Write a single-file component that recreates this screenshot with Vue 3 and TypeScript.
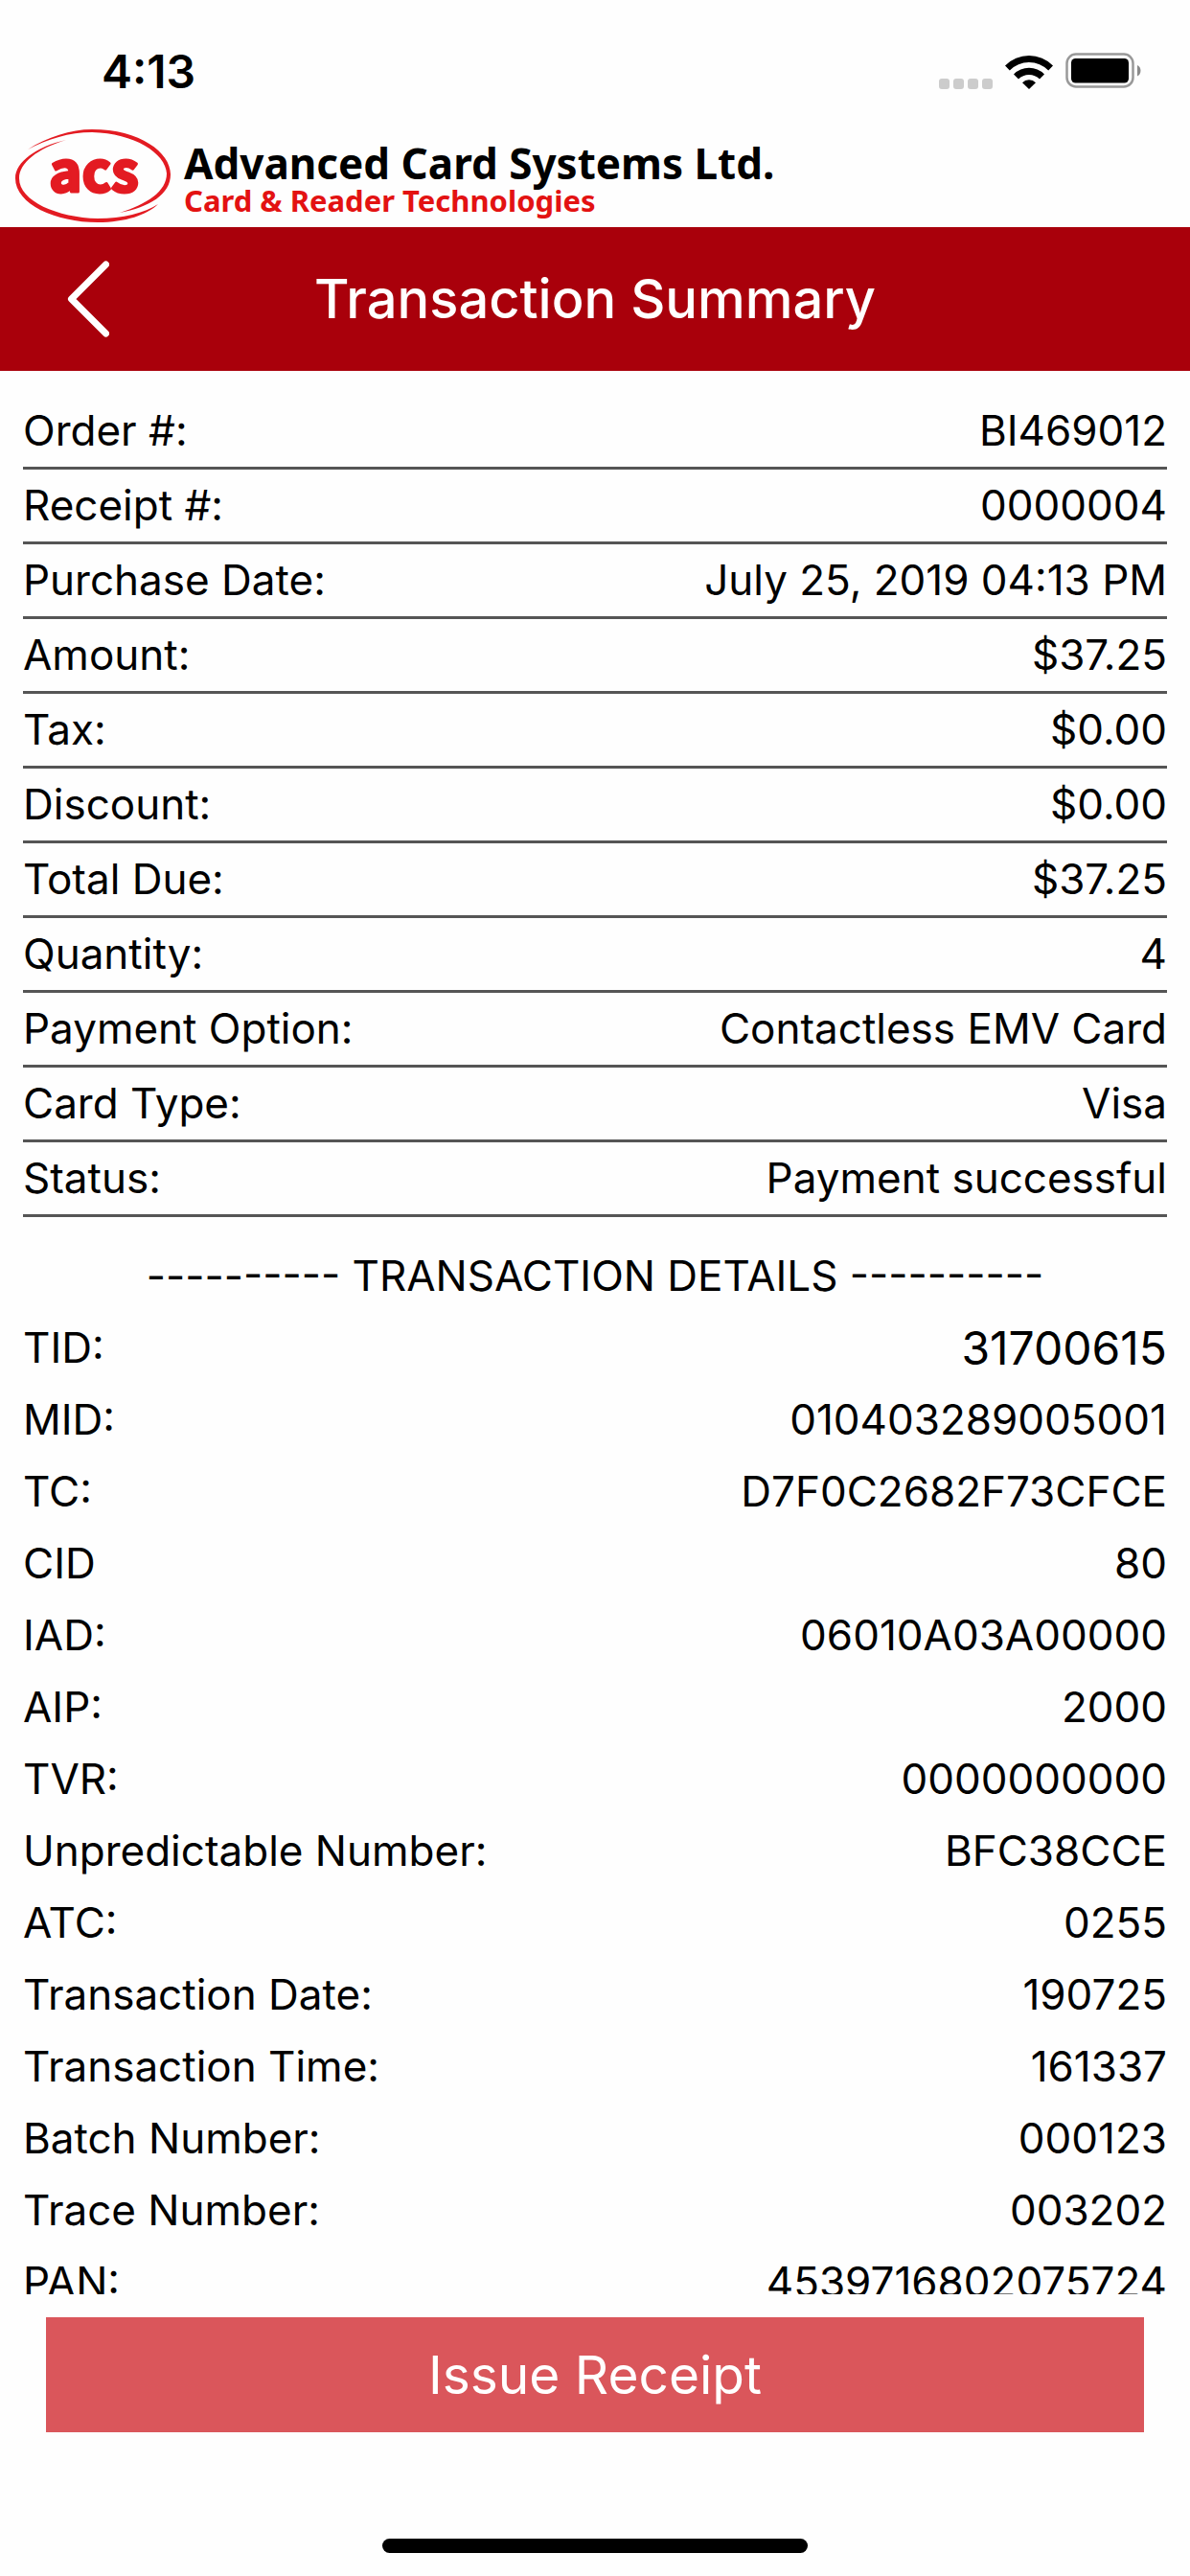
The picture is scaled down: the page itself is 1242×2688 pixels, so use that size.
<script setup lang="ts">
interface Entry {
  label: string
  value: string
  large?: boolean
}

const summary: Entry[] = [
  { label: 'Order #:', value: 'BI469012' },
  { label: 'Receipt #:', value: '0000004' },
  { label: 'Purchase Date:', value: 'July 25, 2019 04:13 PM' },
  { label: 'Amount:', value: '$37.25' },
  { label: 'Tax:', value: '$0.00' },
  { label: 'Discount:', value: '$0.00' },
  { label: 'Total Due:', value: '$37.25' },
  { label: 'Quantity:', value: '4' },
  { label: 'Payment Option:', value: 'Contactless EMV Card' },
  { label: 'Card Type:', value: 'Visa' },
  { label: 'Status:', value: 'Payment successful' },
]

const details: Entry[] = [
  { label: 'TID:', value: '31700615', large: true },
  { label: 'MID:', value: '010403289005001' },
  { label: 'TC:', value: 'D7F0C2682F73CFCE' },
  { label: 'CID', value: '80' },
  { label: 'IAD:', value: '06010A03A00000' },
  { label: 'AIP:', value: '2000' },
  { label: 'TVR:', value: '0000000000' },
  { label: 'Unpredictable Number:', value: 'BFC38CCE' },
  { label: 'ATC:', value: '0255' },
  { label: 'Transaction Date:', value: '190725' },
  { label: 'Transaction Time:', value: '161337' },
  { label: 'Batch Number:', value: '000123' },
  { label: 'Trace Number:', value: '003202' },
  { label: 'PAN:', value: '4539716802075724' },
]
</script>

<template>
  <div class="screen">
    <div class="status-bar">
      <span class="time">4:13</span>
      <div class="indicators">
        <div class="signal"><i v-for="n in 4" :key="n"></i></div>
        <svg class="wifi" width="50" height="36" viewBox="0 0 50 36" aria-hidden="true">
          <path d="M0 11.500A35.300 35.300 0 0 1 50 11.500L45.200 16.400A28.500 28.500 0 0 0 4.800 16.400Z" />
          <path d="M9 20.500A22.600 22.600 0 0 1 41 20.500L36 25.500A15.600 15.600 0 0 0 14 25.500Z" />
          <path d="M18 29.200A10 10 0 0 1 32 29.200L25 36Z" />
        </svg>
        <svg class="battery" width="80" height="38" viewBox="0 0 80 38" aria-hidden="true">
          <rect x="1.500" y="1.500" width="69" height="34" rx="9.500" fill="none" stroke="#999" stroke-width="2.500" />
          <rect x="6" y="6" width="60" height="25.500" rx="4.500" fill="#000" />
          <path d="M75 13a6.500 6.500 0 0 1 0 11.500Z" fill="#8a8a8a" />
        </svg>
      </div>
    </div>

    <div class="brand">
      <svg width="164" height="98" viewBox="0 0 164 98" role="img" aria-label="acs">
        <path d="M13 20C33 7 58 -1 80 -1C130 -1 162 23 162 46C162 67 140 80 109 86C137 77 158 64 158 45C157 24 124 3 80 2C56 2 34 9 13 20Z" fill="#e31b22" />
        <path d="M53 10C22 17 0 33 0 50C0 77 42 96 86 96C115 96 138 88 149 77C135 86 112 92 86 92C44 91 4 74 4 50C4 34 23 19 53 10Z" fill="#e31b22" />
        <text x="82" y="64" text-anchor="middle" class="mark">acs</text>
      </svg>
      <div class="brand-text">
        <span class="company">Advanced Card Systems Ltd.</span>
        <span class="tagline">Card &amp; Reader Technologies</span>
      </div>
    </div>

    <header class="title-bar">
      <button class="back" type="button" aria-label="Back">
        <svg width="44" height="80" viewBox="0 0 44 80" aria-hidden="true">
          <path d="M40.500 4L4.500 40L40.500 76" fill="none" stroke="#fff" stroke-width="7" stroke-linecap="round" stroke-linejoin="round" />
        </svg>
      </button>
      <h1>Transaction Summary</h1>
    </header>

    <main class="content">
      <dl class="summary">
        <div v-for="row in summary" :key="row.label" class="row">
          <dt>{{ row.label }}</dt>
          <dd>{{ row.value }}</dd>
        </div>
      </dl>
      <h2>---------- TRANSACTION DETAILS ----------</h2>
      <dl class="details">
        <div v-for="row in details" :key="row.label" class="row">
          <dt>{{ row.label }}</dt>
          <dd :class="{ large: row.large }">{{ row.value }}</dd>
        </div>
      </dl>
    </main>

    <footer class="actions">
      <button class="issue" type="button">Issue Receipt</button>
      <div class="home-indicator"></div>
    </footer>
  </div>
</template>

<style>
body {
  background: #fefefe;
}
</style>

<style scoped>
.screen {
  display: flex;
  flex-direction: column;
  height: 100vh;
  overflow: hidden;
  background: #fefefe;
  color: #000;
  font-family: Inter, "Liberation Sans", sans-serif;
  font-size: 44px;
}
h1,
h2,
dl,
dd {
  margin: 0;
  font-weight: 400;
}
button {
  border: 0;
  padding: 0;
  font-family: inherit;
  color: #fff;
}
.status-bar {
  flex: none;
  display: flex;
  align-items: center;
  justify-content: space-between;
  height: 136px;
  padding: 12px 50px 0 106px;
  box-sizing: border-box;
}
.time {
  font-size: 48px;
  font-weight: 600;
}
.indicators {
  display: flex;
  align-items: flex-end;
}
.signal {
  display: flex;
  gap: 4px;
  margin-right: 13px;
}
.signal i {
  width: 11px;
  height: 11px;
  border-radius: 3px;
  background: #ccc;
}
.wifi {
  margin-right: 13px;
}
.brand {
  flex: none;
  display: flex;
  align-items: flex-start;
  height: 101px;
  padding: 0 16px;
}
.brand svg {
  overflow: visible;
}
.mark {
  fill: #e31b22;
  stroke: #e31b22;
  stroke-width: 3px;
  stroke-linejoin: round;
  font-family: "Noto Sans CJK SC", sans-serif;
  font-size: 58px;
  font-weight: 700;
}
.brand-text {
  display: flex;
  flex-direction: column;
  margin: 9px 0 0 12px;
  font-family: "Noto Sans", sans-serif;
  font-weight: 700;
  white-space: nowrap;
}
.company {
  font-size: 44px;
  line-height: 50px;
}
.tagline {
  font-size: 31px;
  line-height: 28px;
  color: #e31212;
}
.title-bar {
  flex: none;
  display: grid;
  grid-template-columns: 180px 1fr 180px;
  align-items: center;
  height: 150px;
  background: #a9000b;
  color: #fff;
}
.back {
  display: flex;
  height: 100%;
  padding-left: 70px;
  align-items: center;
  background: none;
}
h1 {
  font-size: 56px;
  font-weight: 500;
  text-align: center;
}
.content {
  flex: 1;
  min-height: 0;
  overflow: hidden;
  padding: 25px 24px 0;
}
.row {
  display: flex;
  justify-content: space-between;
  line-height: 75px;
}
.summary .row {
  border-bottom: 3px solid #555;
}
h2 {
  margin-top: 24px;
  font-size: 44px;
  line-height: 75px;
  text-align: center;
}
.large {
  font-size: 48px;
}
.actions {
  flex: none;
  display: flex;
  flex-direction: column;
  padding: 24px 48px;
}
.issue {
  height: 120px;
  background: #da565b;
  font-size: 55px;
}
.home-indicator {
  align-self: center;
  width: 444px;
  height: 15px;
  margin-top: 111px;
  border-radius: 8px;
  background: #000;
}
</style>
